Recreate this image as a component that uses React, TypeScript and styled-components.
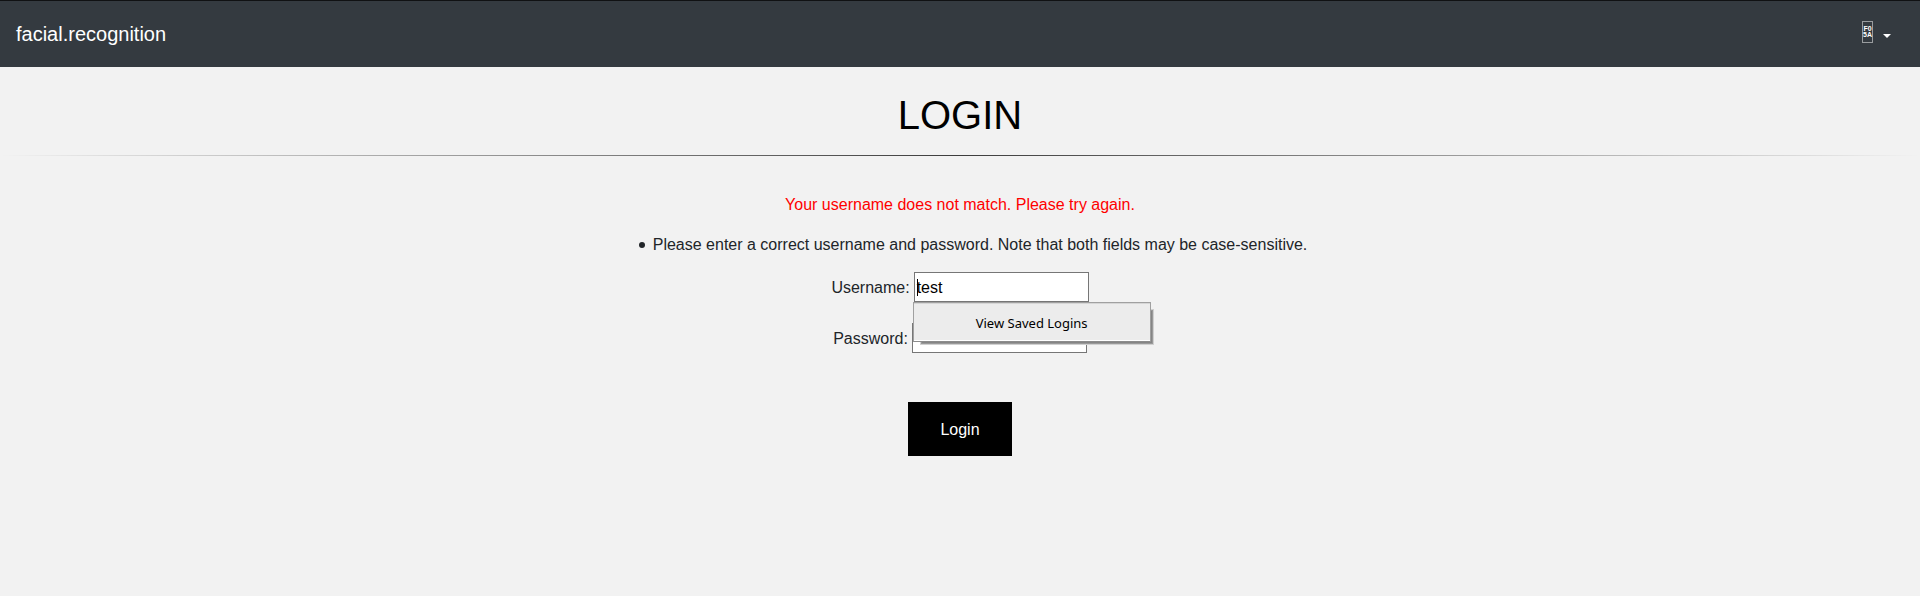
import React from "react";
import styled, { createGlobalStyle } from "styled-components";

const GlobalStyle = createGlobalStyle`
  *, *::before, *::after { box-sizing: border-box; }
  body {
    margin: 0;
    background: #f2f2f2;
    color: #212529;
    font: 16px/24px "Liberation Sans", Arial, sans-serif;
  }
`;

const Page = styled.div`
  min-height: 596px;
  overflow: hidden;
`;

const Navbar = styled.nav`
  display: flex;
  align-items: center;
  justify-content: space-between;
  height: 67px;
  padding: 0 29px 0 16px;
  border-top: 1px solid #101113;
  background: #343a40;
`;

const Brand = styled.a`
  color: #fff;
  font-size: 20px;
  line-height: 30px;
`;

const AccountToggle = styled.div`
  display: flex;
  align-items: center;
  gap: 10px;
  padding-bottom: 4px;
`;

const CodeGlyph = styled.span`
  display: flex;
  flex-direction: column;
  align-items: center;
  justify-content: center;
  width: 11px;
  height: 22px;
  border: 1px solid #999c9f;
  color: #fff;
  font: bold 7px/6px "Liberation Sans", Arial, sans-serif;
`;

const Caret = styled.span`
  margin-top: 8px;
  border-top: 4.8px solid #fff;
  border-left: 4.8px solid transparent;
  border-right: 4.8px solid transparent;
`;

const Content = styled.main`
  display: flex;
  flex-direction: column;
  align-items: center;
`;

const Title = styled.h1`
  margin: 24px 0 16px;
  color: #000;
  font-size: 40px;
  font-weight: 400;
  line-height: 48px;
`;

const Divider = styled.hr`
  width: 100%;
  height: 1px;
  margin: 0 0 37px;
  border: 0;
  background: linear-gradient(to right, transparent, rgba(0, 0, 0, 0.75), transparent);
`;

const ErrorMessage = styled.p`
  margin: 0 0 16px;
  color: #f00;
`;

const ErrorList = styled.ul`
  margin: 0 0 15px;
  padding: 0 0 0 26px;
  list-style: none;
`;

const ErrorItem = styled.li`
  display: flex;
  align-items: center;
  gap: 8px;

  &::before {
    content: "";
    width: 6px;
    height: 6px;
    border-radius: 50%;
    background: #212529;
  }
`;

const Field = styled.div<{ $gap: number }>`
  display: flex;
  align-items: center;
  gap: 4px;
  height: 30px;
  margin-bottom: ${(p) => p.$gap}px;
`;

const Label = styled.label`
  padding-top: 2px;
`;

const InputBox = styled.div`
  position: relative;
  width: 175px;
  height: 30px;
  padding: 3px 2px 1px;
  border: 1px solid #767676;
  background: #fff;
  color: #000;
`;

const TextCursor = styled.span`
  position: absolute;
  left: 2px;
  top: 6px;
  width: 1px;
  height: 17px;
  background: #000;
`;

const SavedLogins = styled.div`
  position: absolute;
  z-index: 1;
  left: -2px;
  top: 29px;
  width: 238px;
  height: 40px;
  border: 1px solid #a0a0a0;
  border-bottom-color: #8c8c8c;
  background: #ececec;
  box-shadow:
    inset 0 1px #d6d6d6,
    inset 0 -1px #fff,
    5px 5px 0 -4px #858585,
    5px 5px 0 -3px #999,
    5px 5px 0 -2px #d0d0d0;
  font: 13px/40px "Noto Sans", sans-serif;
  text-align: center;
`;

const LoginButton = styled.button`
  width: 104px;
  height: 54px;
  padding: 2px 0 0;
  border: 0;
  background: #000;
  color: #fff;
  font: 16px/24px "Liberation Sans", Arial, sans-serif;
`;

export default function App() {
  return (
    <>
      <GlobalStyle />
      <Page>
        <Navbar>
          <Brand>facial.recognition</Brand>
          <AccountToggle>
            <CodeGlyph>
              <span>F0</span>
              <span>5A</span>
            </CodeGlyph>
            <Caret />
          </AccountToggle>
        </Navbar>
        <Content>
          <Title>LOGIN</Title>
          <Divider />
          <ErrorMessage>Your username does not match. Please try again.</ErrorMessage>
          <ErrorList>
            <ErrorItem>
              Please enter a correct username and password. Note that both fields may be case-sensitive.
            </ErrorItem>
          </ErrorList>
          <Field $gap={21}>
            <Label>Username:</Label>
            <InputBox>
              test
              <TextCursor />
              <SavedLogins>View Saved Logins</SavedLogins>
            </InputBox>
          </Field>
          <Field $gap={49}>
            <Label>Password:</Label>
            <InputBox />
          </Field>
          <LoginButton>Login</LoginButton>
        </Content>
      </Page>
    </>
  );
}
